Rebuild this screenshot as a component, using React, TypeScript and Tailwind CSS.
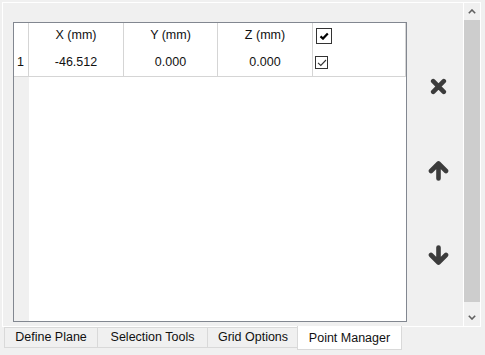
import React from 'react';

const font = { fontFamily: '"Liberation Sans", Arial, sans-serif' };

const columns = ['X (mm)', 'Y (mm)', 'Z (mm)'];
const rows = [{ id: 1, x: '-46.512', y: '0.000', z: '0.000', checked: true }];

const HeaderCheck = () => (
    <div className="flex h-[16px] w-[16px] items-center justify-center border border-[#333333] bg-white">
        <svg width="10" height="8" viewBox="0 0 10 8">
            <path d="M1.5 4.4 L4 6.6 L8.8 1.6" fill="none" stroke="#000" strokeWidth="2.2" />
        </svg>
    </div>
);

const RowCheck = () => (
    <div className="flex h-[13px] w-[13px] items-center justify-center border border-[#333333] bg-white">
        <svg width="10" height="8" viewBox="0 0 10 8">
            <path d="M1 3.8 L3.8 6.4 L9 1" fill="none" stroke="#333" strokeWidth="1.1" />
        </svg>
    </div>
);

const Chevron = ({ down }: { down?: boolean }) => (
    <svg width="8" height="5" viewBox="0 0 8 5">
        <path
            d={down ? 'M0.8 0.8 L4 4 L7.2 0.8' : 'M0.8 4.2 L4 1 L7.2 4.2'}
            fill="none"
            stroke="#606060"
            strokeWidth="1.6"
        />
    </svg>
);

const CrossIcon = () => (
    <svg width="17" height="17" viewBox="0 0 17 17">
        <path d="M3.2 3.2 L13.8 13.8 M13.8 3.2 L3.2 13.8" stroke="#3c3c3c" strokeWidth="4.6" strokeLinecap="round" />
    </svg>
);

const ArrowIcon = ({ down }: { down?: boolean }) => (
    <svg width="21" height="21" viewBox="0 0 21 21" style={down ? { transform: 'scaleY(-1)' } : undefined}>
        <path
            d="M10.5 5 L10.5 18.5 M3 11 L10.5 3.5 L18 11"
            fill="none"
            stroke="#3c3c3c"
            strokeWidth="4.6"
            strokeLinecap="round"
            strokeLinejoin="round"
        />
    </svg>
);

export default function App() {
    return (
        <div className="h-[355px] w-[485px] overflow-hidden bg-[#f0f0f0] text-[12.5px] text-[#111]" style={font}>
            {/* Tab page */}
            <div className="ml-[2px] mt-[2px] flex h-[325px] w-[479px] border border-white">
                {/* Grid */}
                <div className="pl-[10px] pt-[19px]">
                    <div className="flex h-[300px] w-[394px] flex-col border border-[#828790] bg-white">
                        <div className="flex border-b border-[#d5d5d5]">
                            <div className="flex w-[15px] flex-col border-r border-[#d5d5d5]">
                                <div className="h-[25px]" />
                                <div className="flex h-[28px] items-center pl-[3px]">1</div>
                            </div>
                            {columns.map((c, i) => (
                                <div
                                    key={c}
                                    className={`flex flex-col border-r border-[#d5d5d5] ${i === 1 ? 'w-[94px]' : 'w-[95px]'}`}
                                >
                                    <div className="flex h-[25px] items-center justify-center">{c}</div>
                                    <div className="flex h-[28px] items-center justify-center">
                                        {i === 0 ? rows[0].x : i === 1 ? rows[0].y : rows[0].z}
                                    </div>
                                </div>
                            ))}
                            <div className="flex w-[93px] flex-col border-r border-[#d5d5d5]">
                                <div className="flex h-[25px] items-center pl-[3px]">
                                    <HeaderCheck />
                                </div>
                                <div className="flex h-[28px] items-center pl-[2px] pt-[1px]">
                                    <RowCheck />
                                </div>
                            </div>
                        </div>
                        <div className="flex flex-1">
                            <div className="w-[15px] bg-[#f0f0f0]" />
                            <div className="flex-1" />
                        </div>
                    </div>
                </div>

                {/* Row actions */}
                <div className="flex w-[56px] flex-col items-center pl-[6px]">
                    <div className="mt-[75px]">
                        <CrossIcon />
                    </div>
                    <div className="mt-[65px]">
                        <ArrowIcon />
                    </div>
                    <div className="mt-[64px]">
                        <ArrowIcon down />
                    </div>
                </div>

                {/* Scrollbar */}
                <div className="flex w-[17px] flex-col border-l border-white">
                    <div className="flex h-[17px] items-center justify-center">
                        <Chevron />
                    </div>
                    <div className="h-[282px] bg-[#cdcdcd]" />
                    <div className="h-[7px]" />
                    <div className="flex h-[17px] items-center justify-center">
                        <Chevron down />
                    </div>
                </div>
            </div>

            {/* Tabs */}
            <div className="ml-[4px] flex items-start">
                <div className="flex h-[21px] w-[94px] items-center justify-center border border-[#d9d9d9]">Define Plane</div>
                <div className="-ml-px flex h-[21px] w-[111px] items-center justify-center border border-[#d9d9d9]">Selection Tools</div>
                <div className="-ml-px flex h-[21px] w-[92px] items-center justify-center border border-[#d9d9d9]">Grid Options</div>
                <div className="relative z-10 -ml-[2px] -mt-px flex h-[24px] w-[105px] items-center justify-center border border-t-0 border-[#d9d9d9] bg-white pt-[2px]">
                    Point Manager
                </div>
            </div>
        </div>
    );
}
